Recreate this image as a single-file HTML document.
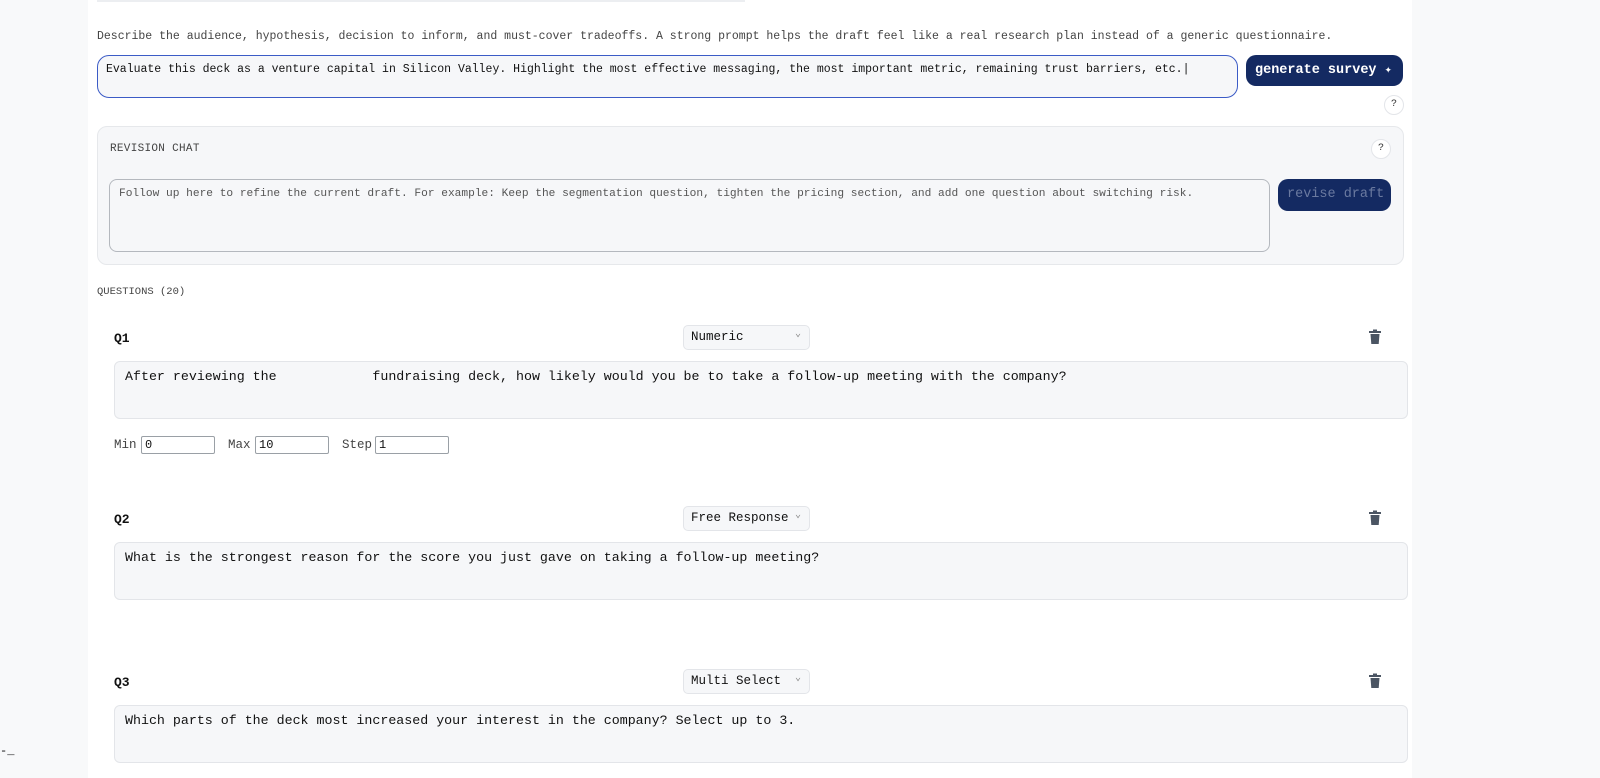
<!DOCTYPE html>
<html><head><meta charset="utf-8"><style>
*{box-sizing:border-box;margin:0;padding:0}
body{width:1600px;height:778px;overflow:hidden;background:#f8f9fa;font-family:"Liberation Mono",monospace;color:#111;position:relative}
.main{position:absolute;left:88px;top:0;width:1324px;height:778px;background:#fff}
.a{position:absolute;white-space:pre}
.box{position:absolute;border-radius:8px;white-space:nowrap}
.ta{position:absolute;background:#f6f7f9;border:1px solid #e3e5e9;border-radius:6px;font-size:13.3px;padding:7px 10px;color:#111;white-space:pre}
.sel{position:absolute;background:#f6f7f9;border:1px solid #e3e5e9;border-radius:5px;font-size:12.5px;padding:4px 7px;height:25px;white-space:nowrap}
.sel:after{content:"⌄";position:absolute;right:8px;top:2px;font-size:10px;color:#888}
.q{font-weight:bold;font-size:13px}
.help{position:absolute;width:20px;height:20px;border-radius:50%;border:1px solid #e3e5e9;background:#fff;font-size:10px;text-align:center;line-height:18px;color:#333}
.inp{position:absolute;height:18px;border:1px solid #9aa0a6;border-radius:2px;font-size:12px;padding:1px 3px;background:#fff}
.tr{position:absolute;width:14px;height:16px}
</style></head><body>
<div class="main"></div>
<div class="a" style="left:97px;top:0;width:648px;height:2px;background:#eceef1"></div>
<div class="a" style="left:97px;top:30px;font-size:11.5px;color:#444">Describe the audience, hypothesis, decision to inform, and must-cover tradeoffs. A strong prompt helps the draft feel like a real research plan instead of a generic questionnaire.</div>
<div class="box" style="left:97px;top:55px;width:1141px;height:43px;border:1.5px solid #3b5bc6;border-radius:12px;background:#f6f7f9"></div>
<div class="a" style="left:106px;top:63px;font-size:11.5px">Evaluate this deck as a venture capital in Silicon Valley. Highlight the most effective messaging, the most important metric, remaining trust barriers, etc.|</div>
<div class="box" style="left:1246px;top:55px;width:157px;height:31px;background:#142a62;border-radius:10px;color:#fff;font-size:13.5px;font-weight:bold;padding:7px 0 0 9px">generate survey <span style="font-size:12px">✦</span></div>
<div class="help" style="left:1384px;top:95px">?</div>
<div class="box" style="left:97px;top:126px;width:1307px;height:139px;background:#f6f7f9;border:1px solid #e6e8eb;border-radius:10px"></div>
<div class="a" style="left:110px;top:143px;font-size:11px;color:#444;letter-spacing:.3px">REVISION CHAT</div>
<div class="help" style="left:1371px;top:139px">?</div>
<div class="box" style="left:109px;top:179px;width:1161px;height:73px;border:1px solid #b4b8be;background:#f6f7f9;border-radius:8px"></div>
<div class="a" style="left:119px;top:188px;font-size:11.2px;color:#555">Follow up here to refine the current draft. For example: Keep the segmentation question, tighten the pricing section, and add one question about switching risk.</div>
<div class="box" style="left:1278px;top:179px;width:113px;height:32px;background:#142a62;border-radius:10px;color:#6b7aa0;font-size:13.5px;padding:8px 0 0 9px">revise draft</div>
<div class="a" style="left:97px;top:286px;font-size:10.5px;color:#444">QUESTIONS (20)</div>

<div class="a q" style="left:114px;top:331px">Q1</div>
<div class="sel" style="left:683px;top:325px;width:127px">Numeric</div>
<svg class="tr" style="left:1368px;top:329px" viewBox="0 0 14 16"><rect x="1" y="2" width="12" height="2" fill="#4b5563"/><rect x="5" y="0.5" width="4" height="2" fill="#4b5563"/><path d="M2.5 5h9l-.8 10H3.3z" fill="#4b5563"/></svg>
<div class="ta" style="left:114px;top:361px;width:1294px;height:58px">After reviewing the            fundraising deck, how likely would you be to take a follow-up meeting with the company?</div>
<div class="a" style="left:114px;top:438px;font-size:12.5px;color:#444">Min</div><div class="inp" style="left:141px;top:436px;width:74px">0</div>
<div class="a" style="left:228px;top:438px;font-size:12.5px;color:#444">Max</div><div class="inp" style="left:255px;top:436px;width:74px">10</div>
<div class="a" style="left:342px;top:438px;font-size:12.5px;color:#444">Step</div><div class="inp" style="left:375px;top:436px;width:74px">1</div>

<div class="a q" style="left:114px;top:512px">Q2</div>
<div class="sel" style="left:683px;top:506px;width:127px">Free Response</div>
<svg class="tr" style="left:1368px;top:510px" viewBox="0 0 14 16"><rect x="1" y="2" width="12" height="2" fill="#4b5563"/><rect x="5" y="0.5" width="4" height="2" fill="#4b5563"/><path d="M2.5 5h9l-.8 10H3.3z" fill="#4b5563"/></svg>
<div class="ta" style="left:114px;top:542px;width:1294px;height:58px">What is the strongest reason for the score you just gave on taking a follow-up meeting?</div>

<div class="a q" style="left:114px;top:675px">Q3</div>
<div class="sel" style="left:683px;top:669px;width:127px">Multi Select</div>
<svg class="tr" style="left:1368px;top:673px" viewBox="0 0 14 16"><rect x="1" y="2" width="12" height="2" fill="#4b5563"/><rect x="5" y="0.5" width="4" height="2" fill="#4b5563"/><path d="M2.5 5h9l-.8 10H3.3z" fill="#4b5563"/></svg>
<div class="ta" style="left:114px;top:705px;width:1294px;height:58px">Which parts of the deck most increased your interest in the company? Select up to 3.</div>
<div class="a" style="left:0;top:744px;font-size:12px">-_</div>
</body></html>
